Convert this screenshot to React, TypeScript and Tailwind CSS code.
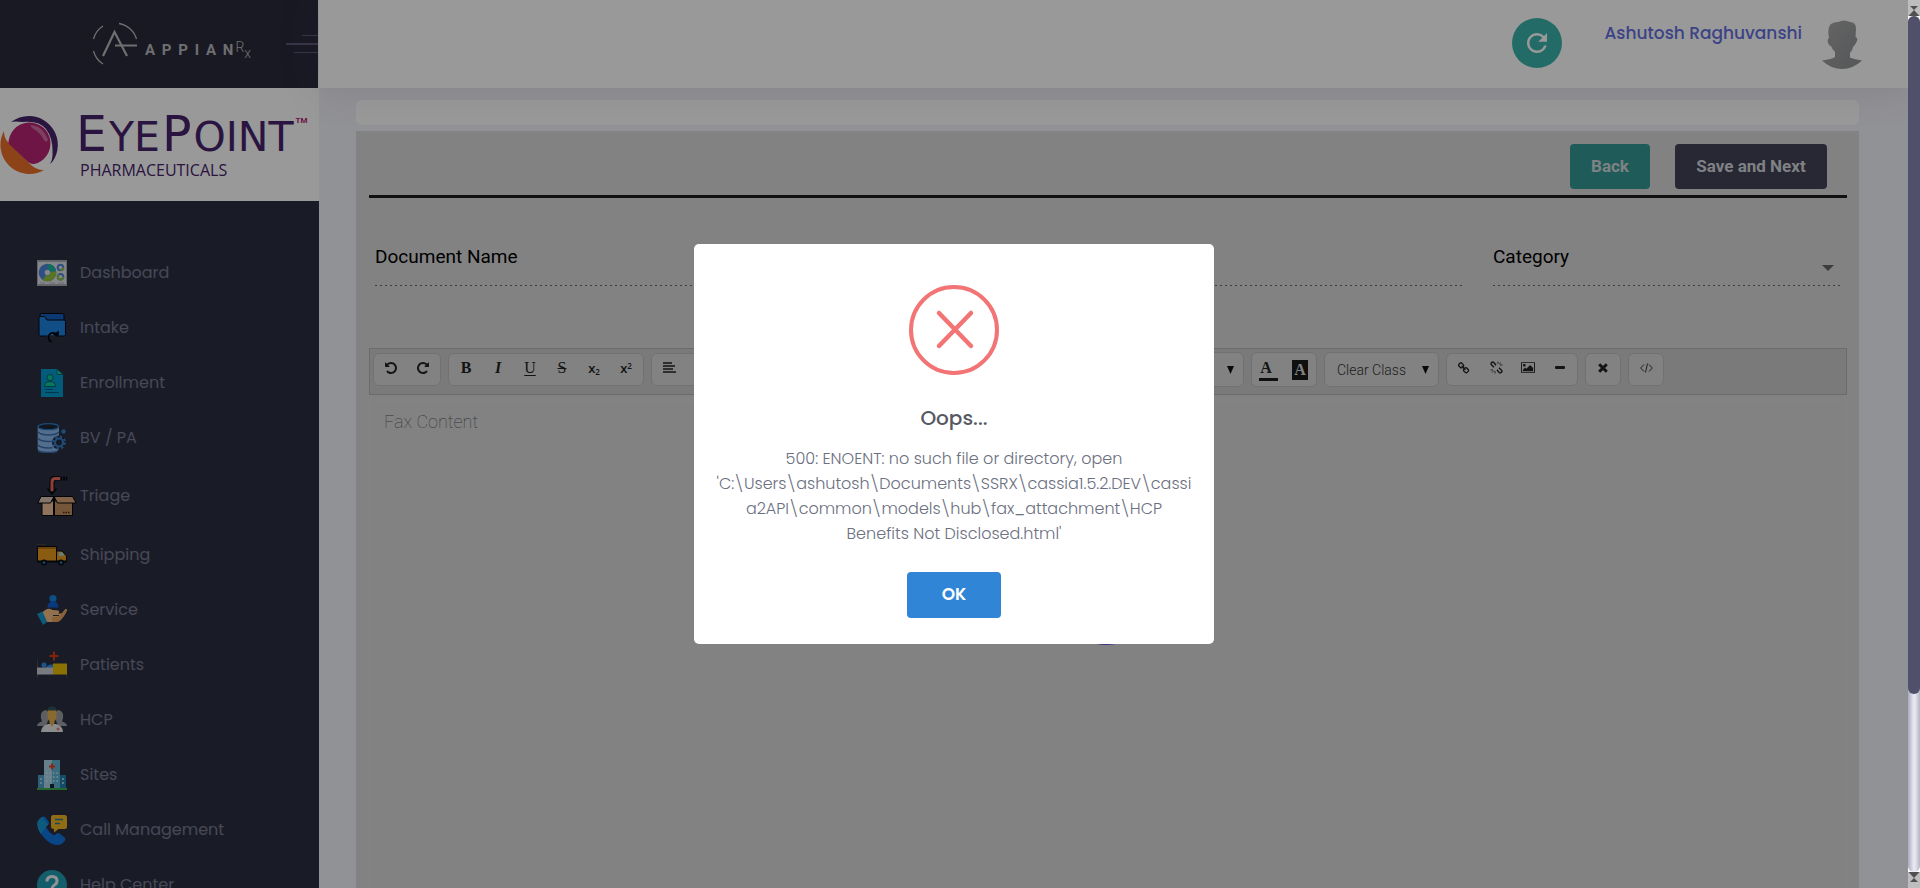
import type { ReactNode } from "react";
import { MdRefresh } from "react-icons/md";

const POPPINS = "font-['Poppins','Inter',sans-serif]";
const ROBOTO = "font-['Roboto',sans-serif]";
const DASHED_LINE =
  "bg-[repeating-linear-gradient(to_right,#666_0_2px,transparent_2px_5px)] bg-[length:100%_1px] bg-bottom bg-no-repeat";

/* ---------- sidebar icons ---------- */

const DashboardIcon = () => (
  <svg viewBox="0 0 30 30" className="size-[30px]">
    <rect x="0" y="2" width="30" height="26" fill="#a9abb0" />
    <rect x="1" y="4" width="28" height="22" fill="#dfe1e6" />
    <circle cx="10.500" cy="14.500" r="5.800" fill="none" stroke="#4f83d8" strokeWidth="6" />
    <path d="M10.500 5.700a8.800 8.800 0 0 1 8.600 7l-5.800 1.200a3 3 0 0 0-2.800-2.200z" fill="#1fb5a0" />
    <path d="M19.200 13.200a8.800 8.800 0 0 1-13.500 8.700l3.300-4.800a3 3 0 0 0 4.400-3z" fill="#8fc43f" />
    <circle cx="23.500" cy="9.500" r="2.800" fill="none" stroke="#4f83d8" strokeWidth="2" />
    <path d="M26.300 9.500a2.800 2.800 0 0 1-2.800 2.800" fill="none" stroke="#8fc43f" strokeWidth="2" />
    <circle cx="23.500" cy="18.800" r="2.800" fill="none" stroke="#4f83d8" strokeWidth="2" />
    <path d="M26.300 18.800a2.800 2.800 0 1 1-4.600-2.100" fill="none" stroke="#8fc43f" strokeWidth="2" />
    <path d="M3 25h5M12 25h6M21 25h6" stroke="#b9bbc0" strokeWidth="1" />
  </svg>
);

const IntakeIcon = () => (
  <svg viewBox="0 0 30 30" className="size-[30px]">
    <path d="M3 4V2q0-1.500 1.500-1.500h21Q27 .500 27 2v6H3z" fill="#1760c0" stroke="#05070c" />
    <path d="M2 4.500Q2 3.500 3 3.500h4.500L10 7h17q1.500 0 1.500 1.500v13q0 1.500-1.500 1.500H3.500Q2 23 2 21.500z" fill="#1e82e0" stroke="#05070c" />
    <path d="M9 24q0-6 6-6.500h7V24z" fill="#1e82e0" />
    <path d="M9 22.400h13V25H9z" fill="#2b3041" />
    <path d="M14.500 28.800a4.600 4.600 0 1 1 4.300-8" fill="none" stroke="#05070c" strokeWidth="1.800" />
    <path d="M21.800 17.500v6.500l-6-2z" fill="#05070c" />
  </svg>
);

const EnrollmentIcon = () => (
  <svg viewBox="0 0 30 30" className="size-[30px]">
    <path d="M4 1h16l6 5.500V29H4z" fill="#0099cc" />
    <path d="M20 1v5.500h6z" fill="#12cc9a" stroke="#055a66" strokeWidth=".800" />
    <circle cx="13" cy="9.500" r="3" fill="#0fc79a" stroke="#055a66" strokeWidth=".900" />
    <path d="M7.500 18.500q0-5 5.500-5t5.500 5z" fill="#0fc79a" stroke="#055a66" strokeWidth=".900" />
    <path d="M8 21.500h8M8 24.500h14" stroke="#055a7c" strokeWidth="1.200" />
  </svg>
);

const BvIcon = () => (
  <svg viewBox="0 0 30 30" className="size-[30px]">
    <path d="M.700 3.500v23Q3 29.500 11.500 29.500T22 26.500v-23z" fill="#8bb6ea" />
    <ellipse cx="11.300" cy="3.700" rx="10.300" ry="3" fill="#1d2738" stroke="#2f7cc0" strokeWidth="1.300" />
    <path d="M1 9q3 3 10.500 3T22 9M1 15.500q3 3 10.500 3 3 0 5-.400M1 22q3 3 10.500 3l4-.300M1 28q3 1.500 10 1.500 6 0 9-1" fill="none" stroke="#3c6fae" strokeWidth="1.400" />
    <circle cx="22" cy="19.500" r="7" fill="#242a3a" />
    <circle cx="22" cy="19.500" r="4" fill="none" stroke="#3a7fc6" strokeWidth="2.200" />
    <circle cx="22" cy="19.500" r="6" fill="none" stroke="#3a7fc6" strokeWidth="2" strokeDasharray="2.400 2.300" />
    <circle cx="26.500" cy="8.500" r="2.300" fill="#2f7cc0" />
  </svg>
);

const TriageIcon = () => (
  <svg viewBox="0 0 40 40" className="size-10">
    <path d="M15 14V6q0-4 4-4h4" fill="none" stroke="#05070c" strokeWidth="5" />
    <path d="M15 15V6q0-3.500 3.500-3.500H23" fill="none" stroke="#e8695c" strokeWidth="3" />
    <path d="M10.500 12.500 15 18l4.500-5.500" fill="none" stroke="#05070c" strokeWidth="1.500" />
    <path d="M24.500.500v4M27 .500v4M29.500.500v4" stroke="#05070c" strokeWidth="1.600" />
    <path d="M5 25h12v14.500H5z" fill="#f0c09a" stroke="#05070c" />
    <path d="M17 25h18.500v14.500H17z" fill="#c4905f" stroke="#05070c" />
    <path d="M4 20.500h13L13.500 27H.800z" fill="#d8c3b4" stroke="#05070c" />
    <path d="M17 20.500h18.500L39.200 27H20.500z" fill="#d9a57c" stroke="#05070c" />
    <path d="M17 21v18" stroke="#05070c" strokeWidth="2" />
    <path d="M26 36.500h7" stroke="#3a2414" strokeWidth="1.500" strokeDasharray="1.500 1" />
  </svg>
);

const ShippingIcon = () => (
  <svg viewBox="0 0 30 30" className="size-[30px]">
    <path d="M0 4.500h9" stroke="#4a4038" />
    <path d="M.500 6.500h19v15H.500z" fill="#e69a1e" stroke="#07090f" />
    <path d="M1 8h18" stroke="#a86208" strokeWidth="1.500" />
    <path d="M19.500 11h5.500l4.500 5v5.500h-10z" fill="#e69a1e" stroke="#07090f" />
    <path d="M22 12.200h3l2.600 3.600H22z" fill="#9fd8de" />
    <path d="M0 21.500h30" stroke="#07090f" strokeWidth="2" />
    <circle cx="7" cy="22.500" r="3" fill="#07090f" />
    <circle cx="7" cy="22.500" r="1.500" fill="#1d6fa0" />
    <circle cx="24" cy="22.500" r="3" fill="#07090f" />
    <circle cx="24" cy="22.500" r="1.500" fill="#1d6fa0" />
  </svg>
);

const ServiceIcon = () => (
  <svg viewBox="0 0 30 30" className="size-[30px]">
    <circle cx="16" cy="3.500" r="3.500" fill="#1583e0" />
    <path d="M10.500 12.500Q11 6 16 6t5.500 6.500z" fill="#0f5fd0" />
    <path d="M5 17.500 9 14.500q3-1.500 6.500.500l6 .500q1.500 2-.500 3l4 0 3-4q2-1 2 .500-2 5-5 8.500-2 3-5.500 3.500L10 27z" fill="#f3bd82" />
    <path d="M22 21.500l6.500-7.500q2 0 1.500 1.500-3 6-5.500 8.500-2 3-5.500 3H15v-5z" fill="#e6a45c" />
    <path d="M16 20.500h6" stroke="#2b3041" strokeWidth="1" />
    <path d="M0 19l5.500-2.500L10 27l-4 3z" fill="#1497cf" />
  </svg>
);

const PatientsIcon = () => (
  <svg viewBox="0 0 30 30" className="size-[30px]">
    <path d="M17 1.500v9M12.500 6h9" stroke="#d83c10" strokeWidth="2" />
    <path d="M.500 9v19M29.500 20v8" stroke="#4a4c52" />
    <circle cx="7" cy="15" r="2.500" fill="#2f8ee8" />
    <path d="M9 18q1-4 7-3.500v4z" fill="#2f8ee8" />
    <path d="M0 17.500h16v7H0z" fill="#c9ccd6" />
    <path d="M16 13.500h14v11H16z" fill="#e8bd08" />
  </svg>
);

const HcpIcon = () => (
  <svg viewBox="0 0 30 30" className="size-[30px]">
    <path d="M4 13Q3 6 8.500 5q4 1 3.500 8l-3 8H0q0-3 5-4.500zM26 13q1-7-4.500-8Q17.500 6 18 13l3 8h9q0-3-5-4.500z" fill="#9a9da4" />
    <path d="M4 27q0-6 7-8h8q7 2 7 8z" fill="#e9e9ea" />
    <path d="M10.500 5.500q0-4 4.500-4t4.500 4v1h-9z" fill="#31535c" />
    <path d="M10.500 5.500h9V12q-.500 3-2 4v2l-2.500 4-2.500-4v-2q-1.500-1-2-4z" fill="#e3b14d" />
    <path d="M21 22.500v3M19.500 24h3" stroke="#e05a4a" />
  </svg>
);

const SitesIcon = () => (
  <svg viewBox="0 0 30 30" className="size-[30px]">
    <path d="M1 15h6v13H1z" fill="#4f9fc9" />
    <path d="M23 15h6v13h-6z" fill="#1f7fae" />
    <path d="M7 0h8v28H7z" fill="#a9d4e8" />
    <path d="M15 0h8v28h-8z" fill="#5fb2d4" />
    <path d="M15 3.500v6M12 6.500h6" stroke="#e04028" strokeWidth="2" />
    <path d="M9 13h12M9 17h12M9 21h12" stroke="#d2edf6" strokeWidth="1.500" strokeDasharray="1.500 2" />
    <path d="M4 18v8M26 18v8" stroke="#bfe4f2" strokeWidth="1.500" strokeDasharray="2 2" />
    <path d="M13 24h4v4h-4z" fill="#1a2638" />
    <path d="M0 29h30" stroke="#3fae4c" strokeWidth="2" />
  </svg>
);

const CallIcon = () => (
  <svg viewBox="0 0 30 30" className="size-[30px]">
    <path d="M5 2q2-1 3.500.500l3 4q1 2-.500 3.500l-2 1.500q2 6 8.500 9l2-2q1.500-1 3 0l4.500 3.500q2 1.500 1 3.500-3 4.500-8 4.500Q13 30 6 21.500-1 13 .500 7 2 3.500 5 2z" fill="#1273e0" />
    <path d="M5 2Q2 3.500.500 7-.500 12 4 19l5-6.500v-1L11 10l-5.500-8z" fill="#1796cf" />
    <path d="M16.500 0h11Q30 0 30 2.500v9q0 2.500-2.500 2.500h-6L17 17.500V14q-3 0-3-2.500v-9Q14 0 16.500 0z" fill="#f0b622" />
    <path d="M18 4.500h8M18 8.500h5" stroke="#2d7396" strokeWidth="1.300" />
  </svg>
);

const HelpIcon = () => (
  <svg viewBox="0 0 30 30" className="size-[30px]">
    <circle cx="15" cy="15" r="15" fill="#229db5" />
    <path d="M10 11.500q0-5 5-5t5 4.500q0 2.500-2.500 4T15 19" fill="none" stroke="#f2f4f5" strokeWidth="3" />
    <circle cx="15" cy="23" r="1.800" fill="#f2f4f5" />
  </svg>
);

const NAV: { label: string; icon: ReactNode }[] = [
  { label: "Dashboard", icon: <DashboardIcon /> },
  { label: "Intake", icon: <IntakeIcon /> },
  { label: "Enrollment", icon: <EnrollmentIcon /> },
  { label: "BV / PA", icon: <BvIcon /> },
  { label: "Triage", icon: <TriageIcon /> },
  { label: "Shipping", icon: <ShippingIcon /> },
  { label: "Service", icon: <ServiceIcon /> },
  { label: "Patients", icon: <PatientsIcon /> },
  { label: "HCP", icon: <HcpIcon /> },
  { label: "Sites", icon: <SitesIcon /> },
  { label: "Call Management", icon: <CallIcon /> },
  { label: "Help Center", icon: <HelpIcon /> },
];

/* ---------- logos ---------- */

function AppianLogo() {
  return (
    <a href="#" className="flex items-center text-[#b9b9bd]">
      <svg viewBox="0 0 46 44" className="h-11 w-[46px]" fill="none" stroke="currentColor">
        <path d="M1.500 17A22 22 0 0 1 11 4M27 1.500A22 22 0 0 1 44.500 17M1.500 29A22 22 0 0 0 11 42" strokeWidth="1.300" />
        <path d="M11 34 22.500 10 35 34" strokeWidth="2.200" />
        <path d="M23 23.500h22" strokeWidth="2" />
      </svg>
      <span className="ml-[7px] mt-3 whitespace-pre font-['Roboto',sans-serif] text-[15px] font-bold leading-5">
        A&nbsp;&thinsp;P&nbsp;&thinsp;P&nbsp;&thinsp;I&nbsp;&thinsp;A&nbsp;&thinsp;N
      </span>
      <span className="ml-0.5 mt-3 flex items-start font-['Roboto',sans-serif] text-sm font-light leading-5">
        R<span className="mt-1.5 leading-5">x</span>
      </span>
    </a>
  );
}

function EyePointLogo() {
  return (
    <a href="#" className="flex h-[113px] shrink-0 items-center bg-white text-[#46236b]">
      <svg viewBox="0 0 58 58" className="size-[58px] shrink-0">
        <circle cx="29" cy="29" r="29" fill="#fff" />
        <path d="M11 6Q19 0 29 0A29 29 0 0 1 53 45l-3 3q3-5 2.500-11Q53 22 46 13T22 6Q15 5 11 6z" fill="#46236b" />
        <path d="M4 15A29 29 0 0 0 44 54q-8 0-14-6L7 25q-3-4-3-10z" fill="#ea7028" />
        <path d="M8.500 27.500A21 21 0 1 1 34 48q-3 .500-6-2L9 28z" fill="#b92373" />
        <path d="M31 9q12 1 17 15-2 3-4 0Q40 16 32 12q-2-2-1-3z" fill="#cf6ba0" />
      </svg>
      <span className="ml-[18px] flex flex-col gap-[3px] pt-1">
        <span className="flex items-baseline gap-0.5 font-['DejaVu_Sans',sans-serif]">
          <span className="text-[49px] leading-[44px]">E</span>
          <span className="text-[41px] leading-9">YE</span>
          <span className="text-[49px] leading-[44px]">P</span>
          <span className="text-[41px] leading-9">OINT</span>
          <span className="mt-0.5 self-start font-['Roboto',sans-serif] text-[8px] font-bold leading-3 text-[#b92373]">TM</span>
        </span>
        <span className="pl-1 font-['Open_Sans',sans-serif] text-base leading-5">PHARMACEUTICALS</span>
      </span>
    </a>
  );
}

/* ---------- editor toolbar ---------- */

function Glyph({ d, box, className = "size-3" }: { d: string; box: string; className?: string }) {
  return (
    <svg viewBox={box} className={className} fill="currentColor">
      <path d={d} />
    </svg>
  );
}

const UNDO =
  "M1536 896q0 156-61 298t-164 245-245 164-298 61q-172 0-327-72.500t-264-204.500q-7-10-6.500-22.500t8.500-20.500l137-138q10-9 25-9 16 2 23 12 73 95 179 147t225 52q104 0 198.500-40.500t163.500-109.500 109.500-163.500 40.500-198.500-40.500-198.500-109.500-163.500-163.500-109.500-198.500-40.500q-98 0-188 35.500t-160 101.500l137 138q31 30 14 69-17 40-59 40h-448q-26 0-45-19t-19-45v-448q0-42 40-59 39-17 69 14l130 129q107-101 244.500-156.500t284.500-55.500q156 0 298 61t245 164 164 245 61 298z";
const LINK =
  "M1456 1216q0-40-28-68l-208-208q-28-28-68-28-42 0-72 32 3 3 19 18.500t21.500 21.500 15 19 13 25.500 3.500 27.500q0 40-28 68t-68 28q-15 0-27.500-3.500t-25.500-13-19-15-21.500-21.500-18.500-19q-33 31-33 73 0 40 28 68l206 207q27 27 68 27 40 0 68-26l147-146q28-28 28-67zm-703-705q0-40-28-68l-206-207q-28-28-68-28-39 0-68 27l-147 146q-28 28-28 67 0 40 28 68l208 208q27 27 68 27 42 0 72-31-3-3-19-18.500t-21.500-21.500-15-19-13-25.500-3.500-27.500q0-40 28-68t68-28q15 0 27.500 3.500t25.500 13 19 15 21.500 21.500 18.500 19q33-31 33-73zm895 705q0 120-85 203l-147 146q-83 83-203 83-121 0-204-85l-206-207q-83-83-83-203 0-123 88-209l-88-88q-86 88-208 88-120 0-204-84l-208-208q-84-84-84-204t85-203l147-146q83-83 203-83 121 0 204 85l206 207q83 83 83 203 0 123-88 209l88 88q86-88 208-88 120 0 204 84l208 208q84 84 84 204z";
const PICTURE =
  "M576 576q0 80-56 136t-136 56-136-56-56-136 56-136 136-56 136 56 56 136zm1024 384v448h-1408v-192l320-320 160 160 512-512zm96-704h-1600q-13 0-22.500 9.500t-9.500 22.500v1216q0 13 9.500 22.500t22.500 9.500h1600q13 0 22.500-9.500t9.500-22.500v-1216q0-13-9.500-22.500t-22.500-9.500zm160 32v1216q0 66-47 113t-113 47h-1600q-66 0-113-47t-47-113v-1216q0-66 47-113t113-47h1600q66 0 113 47t47 113z";

function ToolGroup({ children }: { children: ReactNode }) {
  return (
    <div className="flex h-[33px] shrink-0 items-center rounded-md border border-[#bdbdbd] bg-[#d9d9d9] px-px">{children}</div>
  );
}

function Tool({ label, children }: { label: string; children: ReactNode }) {
  return (
    <button type="button" aria-label={label} className="flex h-7 w-8 items-center justify-center pb-1">
      {children}
    </button>
  );
}

function ToolSelect({ label, text, width }: { label: string; text: string; width: string }) {
  return (
    <div className={`relative flex h-[35px] items-center rounded-md border border-[#bdbdbd] bg-[#d9d9d9] ${width}`}>
      <select
        aria-label={label}
        className="size-full appearance-none bg-transparent px-3 text-sm font-light text-[#333]"
      >
        <option>{text}</option>
      </select>
      <svg viewBox="0 0 7 8" className="pointer-events-none absolute right-[9px] h-2 w-[7px]">
        <path d="M0 0h7L3.500 8z" fill="#111" />
      </svg>
    </div>
  );
}

const Lines = ({ d }: { d: string }) => (
  <svg viewBox="0 0 13 11" className="h-[11px] w-[13px]" stroke="currentColor" strokeWidth="1.600">
    <path d={d} />
  </svg>
);

function Toolbar() {
  const serif = "font-['Liberation_Serif',serif] text-base leading-5";
  return (
    <div className="flex h-[47px] items-center gap-[7px] border border-[#b2b2b2] bg-[#cbcbcb] px-[3px] pb-2 pt-1 text-[#222]">
      <ToolGroup>
        <Tool label="Undo"><Glyph d={UNDO} box="0 128 1536 1536" /></Tool>
        <Tool label="Redo"><Glyph d={UNDO} box="0 128 1536 1536" className="size-3 -scale-x-100" /></Tool>
      </ToolGroup>
      <ToolGroup>
        <Tool label="Bold"><span className={`${serif} font-bold`}>B</span></Tool>
        <Tool label="Italic"><span className={`${serif} font-bold italic`}>I</span></Tool>
        <Tool label="Underline"><span className={`${serif} underline underline-offset-2`}>U</span></Tool>
        <Tool label="Strikethrough"><span className={`${serif} line-through`}>S</span></Tool>
        <Tool label="Subscript">
          <span className="font-['Open_Sans',sans-serif] text-[13px] font-semibold leading-4">x<sub className="text-[8px]">2</sub></span>
        </Tool>
        <Tool label="Superscript">
          <span className="font-['Open_Sans',sans-serif] text-[13px] font-semibold leading-4">x<sup className="text-[8px]">2</sup></span>
        </Tool>
      </ToolGroup>
      <ToolGroup>
        <Tool label="Align left"><Lines d="M0 1h9M0 4h12M0 7h10M0 10h13" /></Tool>
        <Tool label="Align center"><Lines d="M2 1h9M0 4h13M2 7h9M0 10h13" /></Tool>
        <Tool label="Align right"><Lines d="M4 1h9M1 4h12M3 7h10M0 10h13" /></Tool>
        <Tool label="Justify"><Lines d="M0 1h13M0 4h13M0 7h13M0 10h13" /></Tool>
      </ToolGroup>
      <ToolGroup>
        <Tool label="Indent"><Lines d="M0 1h13M4 4h9M4 7h9M0 10h13" /></Tool>
        <Tool label="Outdent"><Lines d="M0 1h13M0 4h9M0 7h9M0 10h13" /></Tool>
      </ToolGroup>
      <ToolSelect label="Block style" text="" width="w-[120px]" />
      <ToolSelect label="Font" text="" width="w-[120px]" />
      <ToolSelect label="Font size" text="" width="w-[125px]" />
      <div className="flex h-[35px] items-center rounded-md border border-[#bdbdbd] bg-[#d9d9d9]">
        <Tool label="Text color">
          <span className={`${serif} mt-1 w-[19px] border-b-[3px] border-[#1a1a1a] pr-1 text-center font-bold`}>A</span>
        </Tool>
        <Tool label="Background color">
          <span className={`${serif} mt-1 w-4 bg-[#1a1a1a] text-center font-bold text-[#d9d9d9]`}>A</span>
        </Tool>
      </div>
      <ToolSelect label="Class" text="Clear Class" width="w-[115px]" />
      <ToolGroup>
        <Tool label="Link"><Glyph d={LINK} box="64 0 1664 1728" /></Tool>
        <Tool label="Unlink">
          <svg viewBox="0 0 13 13" className="size-[13px]" fill="none" stroke="currentColor" strokeWidth="1.400">
            <path d="M6 4.200 3.900 1.500Q2.600.600 1.500 1.700T1.700 4L4 6.200M7 8.800l2.100 2.700q1.300.900 2.400-.200T11.300 9L9 6.800" />
            <path d="M8 3V.500M10 4h2.500M9.300 3.200 11 1.500M5 10v2.500M3 9H.500M3.700 9.800 2 11.500" strokeWidth=".800" />
          </svg>
        </Tool>
        <Tool label="Insert image"><Glyph d={PICTURE} box="-64 0 1920 1792" className="h-[13px] w-3.5" /></Tool>
        <Tool label="Horizontal line">
          <svg viewBox="0 0 10 3" className="h-[3px] w-2.5"><rect width="10" height="3" rx="1" fill="currentColor" /></svg>
        </Tool>
      </ToolGroup>
      <ToolGroup>
        <Tool label="Clear formatting">
          <svg viewBox="0 0 10 10" className="size-2.5" stroke="currentColor" strokeWidth="3"><path d="m1.200 1.200 7.600 7.600m0-7.600L1.200 8.800" /></svg>
        </Tool>
      </ToolGroup>
      <ToolGroup>
        <Tool label="Toggle HTML">
          <svg viewBox="0 0 13 10" className="h-2.5 w-[13px]" fill="none" stroke="currentColor" strokeWidth=".900">
            <path d="M4 1.500.700 5 4 8.500M9 1.500 12.300 5 9 8.500M7.500.500l-2 9" />
          </svg>
        </Tool>
      </ToolGroup>
    </div>
  );
}

/* ---------- page ---------- */

function Sidebar() {
  return (
    <aside className="flex w-[319px] shrink-0 flex-col bg-[#2b3041]">
      <div className="flex h-[88px] shrink-0 items-center justify-between border-r border-white bg-[#2a2a3c] pl-[92px]">
        <AppianLogo />
        <button type="button" aria-label="Toggle menu" className="flex flex-col items-end gap-[7px]">
          <span className="h-px w-4 bg-[#5b5975]" />
          <span className="h-0.5 w-8 bg-[#5b5975]" />
          <span className="h-px w-6 bg-[#5b5975]" />
        </button>
      </div>
      <EyePointLogo />
      <nav className="pt-11">
        <ul>
          {NAV.map((item) => (
            <li key={item.label}>
              <a
                href="#"
                className={`flex min-h-[55px] items-center py-[11px] pl-[37px] ${POPPINS} text-base leading-6 text-[#787892]`}
              >
                <span className="flex w-[43px] shrink-0">{item.icon}</span>
                {item.label}
              </a>
            </li>
          ))}
        </ul>
      </nav>
    </aside>
  );
}

function Header() {
  return (
    <header className="relative flex h-[88px] shrink-0 items-start justify-end bg-white pr-[46px] pt-[18px] shadow-[0_0_40px_0_rgba(82,63,105,0.15)]">
      <button
        type="button"
        aria-label="Refresh"
        className="flex size-[50px] items-center justify-center rounded-full bg-[#3ab3aa] text-white"
      >
        <MdRefresh className="size-[30px]" />
      </button>
      <a href="#" className={`ml-[42px] ${POPPINS} text-[17px] font-medium leading-[30px] text-[#646fe0]`}>
        Ashutosh Raghuvanshi
      </a>
      <svg viewBox="0 0 40 50" className="ml-5 mt-0.5 h-[50px] w-10">
        <defs>
          <linearGradient id="avatar" x1="0" y1="0" x2="1" y2="1">
            <stop offset="0" stopColor="#a8a8a8" />
            <stop offset="1" stopColor="#8e9093" />
          </linearGradient>
        </defs>
        <path
          d="M7 18Q5 8 9 4q3-2 7-2 6-3 12 0 6 0 6 7l-.500 8q3 1 1 5t-3 4q-1 4-3.500 7v4.500Q31 39 40 40.500 31 49 20 49T0 40.500Q10 39 13 37v-5q-3-3-4-6-2 0-3-3.500T7 18z"
          fill="url(#avatar)"
        />
      </svg>
    </header>
  );
}

function Editor() {
  return (
    <main className="flex min-h-0 flex-1 flex-col gap-1.5 pl-[37px] pr-[49px] pt-3">
      <div className="h-[25px] shrink-0 rounded-md bg-white" />
      <section className={`flex-1 bg-[#d9d9d9] pl-[13px] pr-3 pt-[13px] ${ROBOTO}`}>
        <div className="flex justify-end gap-[25px] border-b-[3px] border-[#1c1c1c] pb-1.5 pr-5">
          <button type="button" className="h-[45px] w-20 rounded bg-[#349994] text-[17px] font-bold text-[#d2d9dc]">
            Back
          </button>
          <button type="button" className="h-[45px] w-[152px] rounded bg-[#434157] text-[17px] font-bold text-[#d2d9dc]">
            Save and Next
          </button>
        </div>
        <div className="mt-[47px] flex gap-7 px-1.5 text-[19px] text-black">
          <div className="flex flex-1 flex-col">
            <label htmlFor="document-name" className="leading-6">Document Name</label>
            <input id="document-name" className={`h-[17px] outline-none ${DASHED_LINE}`} />
          </div>
          <div className="relative flex w-[348px] flex-col">
            <label htmlFor="category" className="leading-6">Category</label>
            <select id="category" className={`h-[17px] appearance-none outline-none ${DASHED_LINE}`} />
            <svg viewBox="0 0 12 6" className="pointer-events-none absolute bottom-[15px] right-[7px] h-1.5 w-3">
              <path d="M0 0h12L6 6z" fill="#666" />
            </svg>
          </div>
        </div>
        <div className="mt-[62px]">
          <Toolbar />
          <textarea
            aria-label="Fax Content"
            placeholder="Fax Content"
            className="mt-1.5 block h-[600px] w-full resize-none border border-[#dedede] bg-transparent px-3.5 py-2 text-lg font-thin leading-6 outline-none placeholder:text-[#565c60]"
          />
        </div>
      </section>
    </main>
  );
}

function ErrorDialog() {
  return (
    <div
      role="alertdialog"
      aria-labelledby="dialog-title"
      aria-describedby="dialog-text"
      className={`flex w-[520px] flex-col items-center rounded-[5px] bg-white px-5 pb-[26px] pt-[41px] ${POPPINS}`}
    >
      <svg viewBox="0 0 90 90" className="size-[90px]" fill="none" stroke="#f27474" strokeLinecap="round">
        <circle cx="45" cy="45" r="43" strokeWidth="4" />
        <path d="m30 28 32 33m0-33-32 33" strokeWidth="4.500" />
      </svg>
      <h2 id="dialog-title" className="mt-7 text-xl font-medium leading-[30px] text-[#575962]">Oops...</h2>
      <p id="dialog-text" className="mt-[13px] whitespace-nowrap text-center text-base font-light leading-[25px] text-[#6c7080]">
        500: ENOENT: no such file or directory, open
        <br />
        'C:\Users\ashutosh\Documents\SSRX\cassia1.5.2.DEV\cassi
        <br />
        a2API\common\models\hub\fax_attachment\HCP
        <br />
        Benefits Not Disclosed.html'
      </p>
      <button type="button" className="mt-[26px] h-[46px] w-[94px] rounded bg-[#3085d6] text-[17px] font-semibold text-white">
        OK
      </button>
    </div>
  );
}

const Arrows = () => (
  <svg viewBox="0 0 12 16" className="h-4 w-3 shrink-0">
    <path d="M0 0h12v16H0z" fill="#bdbdbd" />
    <path d="M2 6h8l-4 4zM6 10l5.500 6H.500z" fill="#505050" />
  </svg>
);

function Scrollbar() {
  return (
    <div className="z-20 flex w-3 shrink-0 flex-col bg-white">
      <Arrows />
      <div className="flex min-h-0 flex-1 flex-col rounded-full bg-[linear-gradient(to_right,#a9a9bd,#e6e6f0_45%,#e6e6f0_60%,#b4b4c6)]">
        <div className="h-[79.2%] rounded-full bg-[#50506b]" />
      </div>
      <div className="-scale-y-100"><Arrows /></div>
    </div>
  );
}

export default function App() {
  return (
    <div className="flex h-screen overflow-hidden bg-[#f2f3f8]">
      <Sidebar />
      <div className="flex min-w-0 flex-1 flex-col">
        <Header />
        <Editor />
      </div>
      <div className="absolute inset-0 z-10 flex items-center justify-center bg-black/40 pr-3">
        <div className="relative">
          <span className="absolute -bottom-px right-[58px] size-[100px] rounded-full bg-[#3c3488]" />
          <div className="relative">
            <ErrorDialog />
          </div>
        </div>
      </div>
      <Scrollbar />
    </div>
  );
}
